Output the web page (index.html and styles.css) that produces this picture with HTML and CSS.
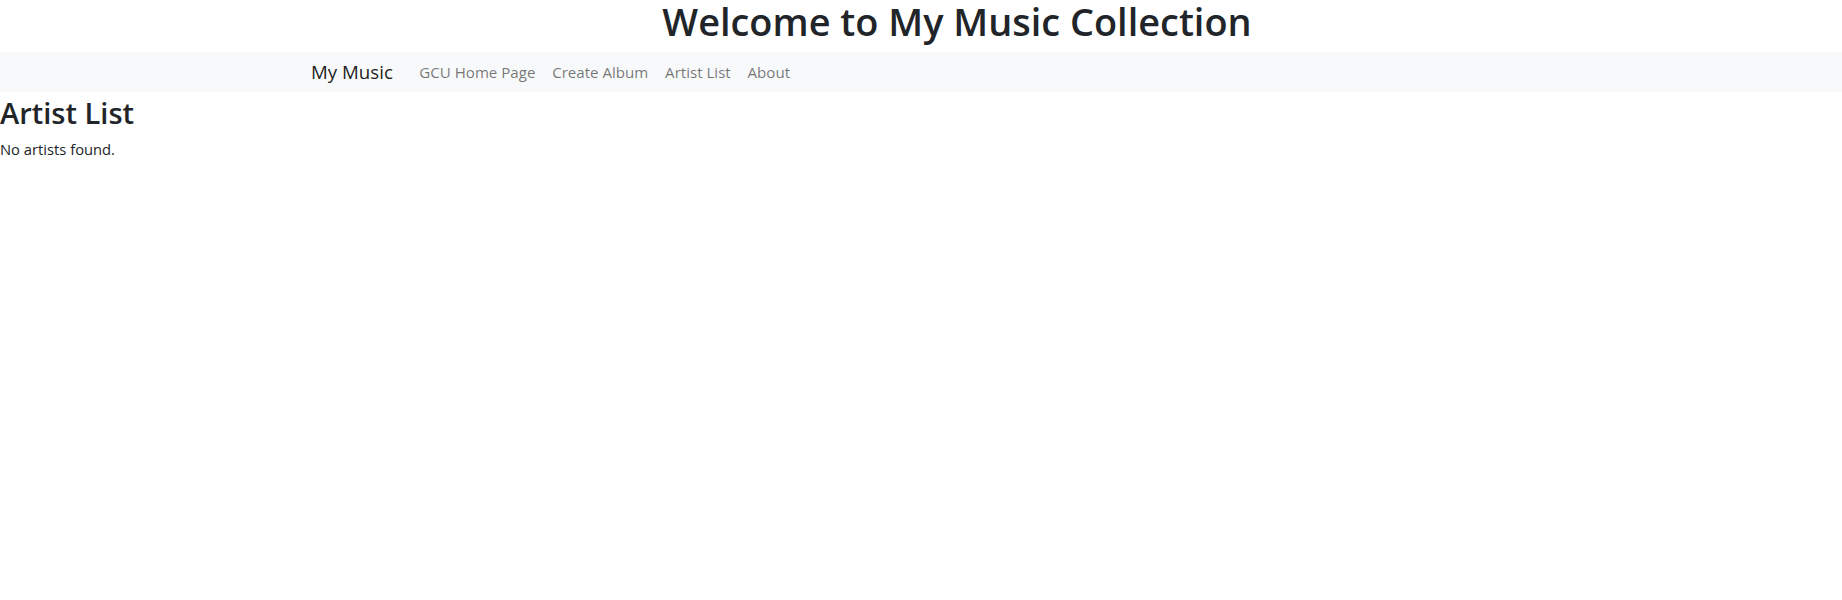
FILE: index.html
```html
<!DOCTYPE html>
<html lang="en">
<head>
<meta charset="utf-8">
<title>My Music</title>
<link rel="stylesheet" href="styles.css">
</head>
<body>
<header class="site-header">
  <h1 class="site-title">Welcome to My Music Collection</h1>
</header>
<nav class="navbar">
  <div class="navbar-inner">
    <a class="navbar-brand" href="#">My Music</a>
    <ul class="nav-list">
      <li><a class="nav-link" href="#">GCU Home Page</a></li>
      <li><a class="nav-link" href="#">Create Album</a></li>
      <li><a class="nav-link" href="#">Artist List</a></li>
      <li><a class="nav-link" href="#">About</a></li>
    </ul>
  </div>
</nav>
<main class="content">
  <h2 class="page-title">Artist List</h2>
  <p class="empty">No artists found.</p>
</main>
</body>
</html>
```
FILE: styles.css
```css
* { box-sizing: border-box; }
html, body { margin: 0; padding: 0; }
body {
  font-family: "Open Sans", "Noto Sans", sans-serif;
  font-size: 14.75px;
  line-height: 24px;
  color: #212529;
  background: #fff;
}
.site-header {
  display: flex;
  justify-content: center;
  padding-left: 72px;
  height: 52px;
}
.site-title {
  margin: 0;
  font-size: 37.9px;
  font-weight: 600;
  line-height: 42px;
}
.navbar {
  background: #f8f9fa;
  height: 40px;
}
.navbar-inner {
  display: flex;
  align-items: center;
  height: 40px;
  padding-left: 311px;
}
.navbar-brand {
  font-size: 18.7px;
  color: rgba(0, 0, 0, 0.9);
  text-decoration: none;
  margin-right: 18px;
  padding: 5px 0;
  line-height: 30px;
}
.nav-list {
  display: flex;
  list-style: none;
  margin: 0;
  padding: 0;
}
.nav-link {
  display: block;
  padding: 8px 8.4px;
  font-size: 15.1px;
  color: rgba(0, 0, 0, 0.55);
  text-decoration: none;
  line-height: 24px;
}
.page-title {
  margin: 0 0 3px;
  font-size: 29.05px;
  font-weight: 600;
  line-height: 42px;
}
.empty {
  margin: 0;
}
```
